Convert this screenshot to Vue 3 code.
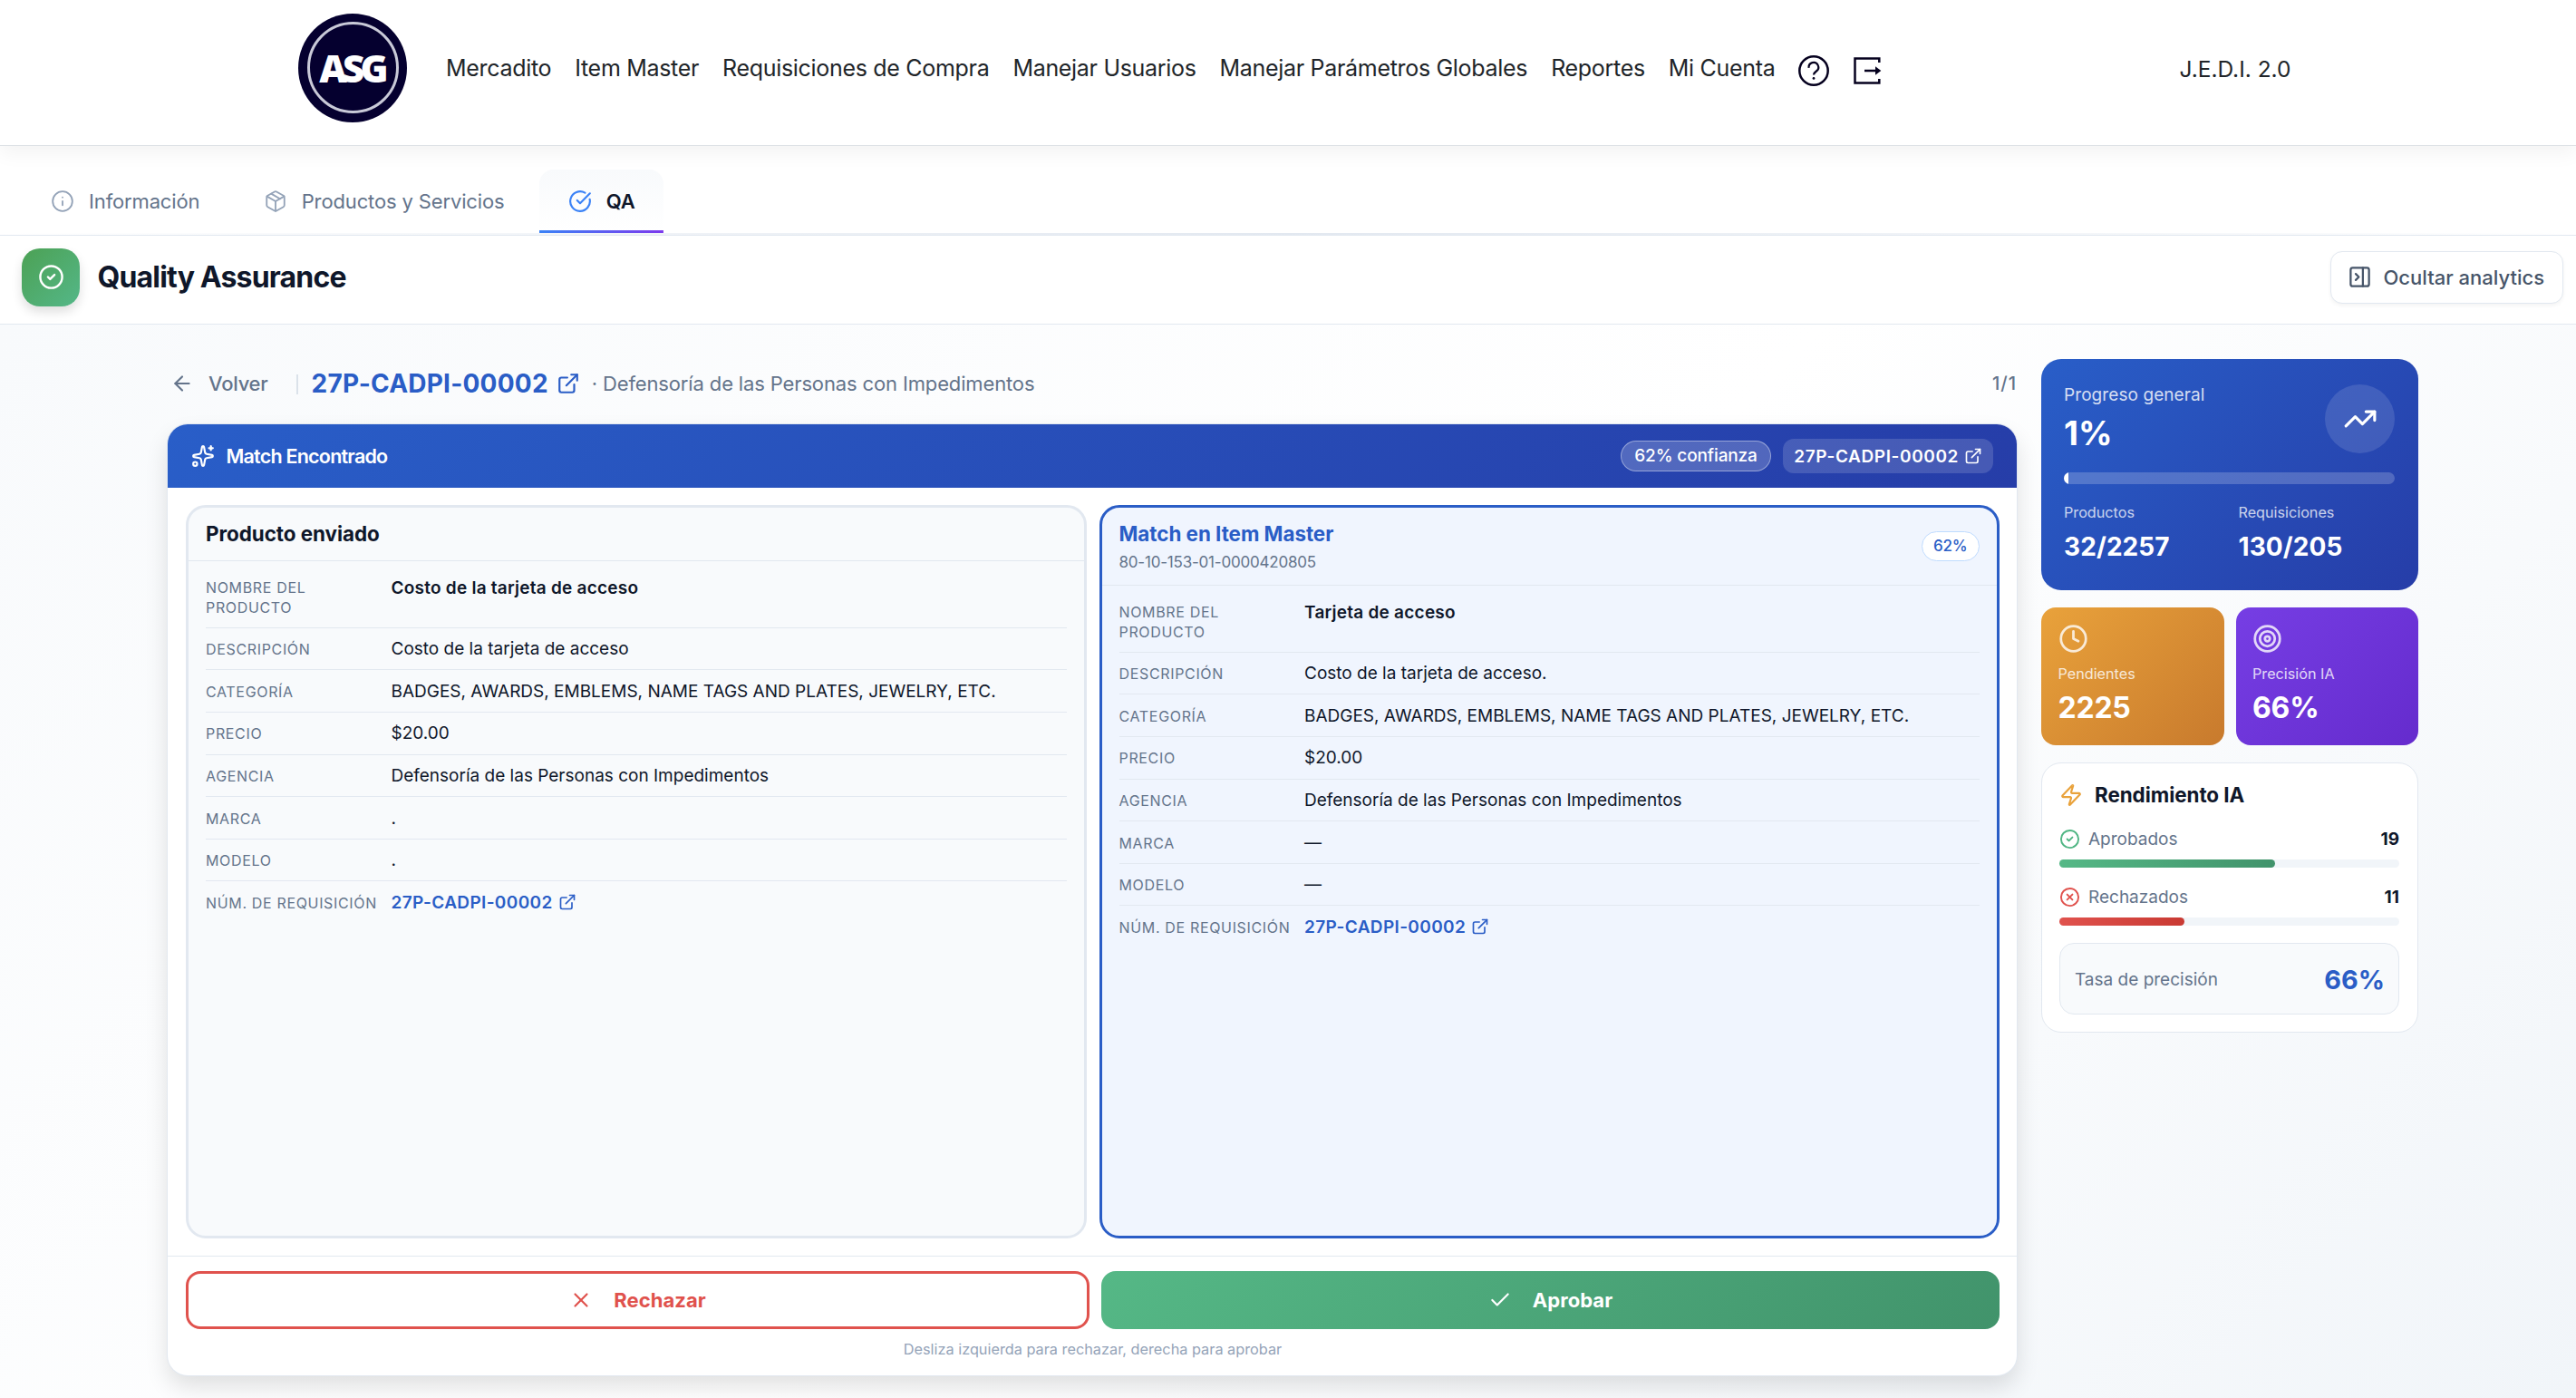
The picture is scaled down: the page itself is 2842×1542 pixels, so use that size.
<template>
  <div class="page">
    <header class="topbar">
      <div class="logo">
        <div class="logo-ring"><span>ASG</span></div>
      </div>
      <nav class="main-nav">
        <a v-for="link in navLinks" :key="link">{{ link }}</a>
        <svg class="nav-help" viewBox="0 0 36 36" fill="none" stroke="currentColor" stroke-width="2.5" v-html="icons.help"></svg>
        <svg class="nav-exit" viewBox="0 0 36 36" fill="none" stroke="currentColor" stroke-width="2.5" v-html="icons.exit"></svg>
      </nav>
      <span class="brand">J.E.D.I. 2.0</span>
    </header>

    <div class="tabs">
      <div v-for="tab in tabs" :key="tab.label" class="tab" :class="{ active: tab.active }">
        <svg class="icon tab-icon" viewBox="0 0 24 24" v-html="icons[tab.icon]"></svg>
        <span>{{ tab.label }}</span>
      </div>
    </div>

    <div class="title-bar">
      <div class="title-icon">
        <svg class="icon" viewBox="0 0 24 24" v-html="icons.circleCheck"></svg>
      </div>
      <h1>Quality Assurance</h1>
      <button class="hide-btn">
        <svg class="icon" viewBox="0 0 24 24" v-html="icons.panel"></svg>
        <span>Ocultar analytics</span>
      </button>
    </div>

    <main class="content">
      <section class="review">
        <div class="crumbs">
          <svg class="icon back-icon" viewBox="0 0 24 24" v-html="icons.arrowLeft"></svg>
          <span class="back">Volver</span>
          <span class="divider"></span>
          <span class="req-id">{{ reqId }}</span>
          <svg class="icon req-icon" viewBox="0 0 24 24" v-html="icons.external"></svg>
          <span class="agency">· Defensoría de las Personas con Impedimentos</span>
          <span class="count">1/1</span>
        </div>

        <div class="match-card">
          <div class="match-head">
            <svg class="icon spark" viewBox="0 0 24 24" v-html="icons.sparkles"></svg>
            <span class="match-title">Match Encontrado</span>
            <span class="confidence">62% confianza</span>
            <span class="req-tag">
              <span>{{ reqId }}</span>
              <svg class="icon" viewBox="0 0 24 24" v-html="icons.external"></svg>
            </span>
          </div>

          <div class="panels">
            <div v-for="panel in panels" :key="panel.title" class="panel" :class="{ matched: panel.code }">
              <div class="panel-head">
                <div>
                  <h2>{{ panel.title }}</h2>
                  <p v-if="panel.code" class="code">{{ panel.code }}</p>
                </div>
                <span v-if="panel.code" class="score">62%</span>
              </div>
              <div class="rows">
                <div v-for="(value, i) in panel.values" :key="i" class="row">
                  <span class="label">{{ labels[i] }}</span>
                  <span class="value" :class="{ strong: i === 0 }">{{ value }}</span>
                </div>
                <div class="row">
                  <span class="label">Núm. de requisición</span>
                  <span class="value link">
                    <span>{{ reqId }}</span>
                    <svg class="icon" viewBox="0 0 24 24" v-html="icons.external"></svg>
                  </span>
                </div>
              </div>
            </div>
          </div>

          <div class="match-foot">
            <div class="actions">
              <button class="reject">
                <svg class="icon" viewBox="0 0 24 24" v-html="icons.x"></svg>
                <span>Rechazar</span>
              </button>
              <button class="approve">
                <svg class="icon" viewBox="0 0 24 24" v-html="icons.check"></svg>
                <span>Aprobar</span>
              </button>
            </div>
            <p class="hint">Desliza izquierda para rechazar, derecha para aprobar</p>
          </div>
        </div>
      </section>

      <aside class="analytics">
        <div class="progress-card">
          <div class="progress-top">
            <div>
              <p class="progress-label">Progreso general</p>
              <p class="progress-value">1%</p>
            </div>
            <div class="trend">
              <svg class="icon" viewBox="0 0 24 24" v-html="icons.trending"></svg>
            </div>
          </div>
          <div class="progress-track"><div class="progress-fill" :style="{ width: progress + '%' }"></div></div>
          <div class="totals">
            <div v-for="total in totals" :key="total.label">
              <p class="total-label">{{ total.label }}</p>
              <p class="total-value">{{ total.value }}</p>
            </div>
          </div>
        </div>

        <div class="mini-cards">
          <div v-for="card in miniCards" :key="card.label" class="mini" :class="card.kind">
            <svg class="icon" viewBox="0 0 24 24" v-html="icons[card.icon]"></svg>
            <p class="mini-label">{{ card.label }}</p>
            <p class="mini-value">{{ card.value }}</p>
          </div>
        </div>

        <div class="perf-card">
          <div class="perf-title">
            <svg class="icon" viewBox="0 0 24 24" v-html="icons.zap"></svg>
            <h3>Rendimiento IA</h3>
          </div>
          <div v-for="item in performance" :key="item.label" class="perf-item" :class="item.kind">
            <div class="perf-row">
              <svg class="icon" viewBox="0 0 24 24" v-html="icons[item.icon]"></svg>
              <span class="perf-label">{{ item.label }}</span>
              <span class="perf-count">{{ item.count }}</span>
            </div>
            <div class="perf-track"><div class="perf-fill" :style="{ width: item.percent + '%' }"></div></div>
          </div>
          <div class="rate">
            <span>Tasa de precisión</span>
            <strong>66%</strong>
          </div>
        </div>
      </aside>
    </main>
  </div>
</template>

<script setup>
import { ref } from 'vue'

const reqId = '27P-CADPI-00002'
const progress = ref(1.4)

const navLinks = [
  'Mercadito',
  'Item Master',
  'Requisiciones de Compra',
  'Manejar Usuarios',
  'Manejar Parámetros Globales',
  'Reportes',
  'Mi Cuenta'
]

const tabs = [
  { label: 'Información', icon: 'info' },
  { label: 'Productos y Servicios', icon: 'package' },
  { label: 'QA', icon: 'checkBig', active: true }
]

const labels = ['Nombre del producto', 'Descripción', 'Categoría', 'Precio', 'Agencia', 'Marca', 'Modelo']

const category = 'BADGES, AWARDS, EMBLEMS, NAME TAGS AND PLATES, JEWELRY, ETC.'
const agency = 'Defensoría de las Personas con Impedimentos'

const panels = [
  {
    title: 'Producto enviado',
    values: ['Costo de la tarjeta de acceso', 'Costo de la tarjeta de acceso', category, '$20.00', agency, '.', '.']
  },
  {
    title: 'Match en Item Master',
    code: '80-10-153-01-0000420805',
    values: ['Tarjeta de acceso', 'Costo de la tarjeta de acceso.', category, '$20.00', agency, '—', '—']
  }
]

const totals = [
  { label: 'Productos', value: '32/2257' },
  { label: 'Requisiciones', value: '130/205' }
]

const miniCards = [
  { label: 'Pendientes', value: '2225', icon: 'clock', kind: 'orange' },
  { label: 'Precisión IA', value: '66%', icon: 'target', kind: 'purple' }
]

const performance = [
  { label: 'Aprobados', count: 19, percent: 63.4, icon: 'circleCheck', kind: 'good' },
  { label: 'Rechazados', count: 11, percent: 36.7, icon: 'circleX', kind: 'bad' }
]

const icons = {
  help: '<circle cx="18" cy="18" r="15.7"/><path d="M12.6 14.8a5.3 5.3 0 1 1 8.3 3.7c-2 1.400-2.900 2.100-2.900 4.100" stroke-width="2.2"/><circle cx="18" cy="26.4" r="1.4" fill="currentColor" stroke="none"/>',
  exit: '<path d="M31.3 9V4.5H4.5v27h26.8V27"/><path d="M15 18h13"/><path d="M27 13.2l6.300 4.800-6.300 4.800z" fill="currentColor" stroke="none"/>',
  info: '<circle cx="12" cy="12" r="10"/><path d="M12 16v-4"/><path d="M12 8h.01"/>',
  package: '<path d="M11 21.730a2 2 0 0 0 2 0l7-4A2 2 0 0 0 21 16V8a2 2 0 0 0-1-1.730l-7-4a2 2 0 0 0-2 0l-7 4A2 2 0 0 0 3 8v8a2 2 0 0 0 1 1.730z"/><path d="M12 22V12"/><path d="M3.290 7 12 12l8.710-5"/><path d="m7.500 4.270 9 5.150"/>',
  checkBig: '<path d="M21.801 10A10 10 0 1 1 17 3.335"/><path d="m9 11 3 3L22 4"/>',
  circleCheck: '<circle cx="12" cy="12" r="10"/><path d="m9 12 2 2 4-4"/>',
  circleX: '<circle cx="12" cy="12" r="10"/><path d="m15 9-6 6"/><path d="m9 9 6 6"/>',
  panel: '<rect width="18" height="18" x="3" y="3" rx="2"/><path d="M15 3v18"/><path d="m8 9 3 3-3 3"/>',
  arrowLeft: '<path d="m12 19-7-7 7-7"/><path d="M19 12H5"/>',
  external: '<path d="M15 3h6v6"/><path d="M10 14 21 3"/><path d="M18 13v6a2 2 0 0 1-2 2H5a2 2 0 0 1-2-2V8a2 2 0 0 1 2-2h6"/>',
  sparkles: '<path d="M11.017 2.814a1 1 0 0 1 1.966 0l1.051 5.558a2 2 0 0 0 1.594 1.594l5.558 1.051a1 1 0 0 1 0 1.966l-5.558 1.051a2 2 0 0 0-1.594 1.594l-1.051 5.558a1 1 0 0 1-1.966 0l-1.051-5.558a2 2 0 0 0-1.594-1.594l-5.558-1.051a1 1 0 0 1 0-1.966l5.558-1.051a2 2 0 0 0 1.594-1.594z"/><path d="M20 2v4"/><path d="M22 4h-4"/><circle cx="4" cy="20" r="2"/>',
  x: '<path d="M18 6 6 18"/><path d="m6 6 12 12"/>',
  check: '<path d="M20 6 9 17l-5-5"/>',
  trending: '<path d="M16 7h6v6"/><path d="m22 7-8.500 8.500-5-5L2 17"/>',
  clock: '<circle cx="12" cy="12" r="10"/><path d="M12 6v6l4 2"/>',
  target: '<circle cx="12" cy="12" r="10"/><circle cx="12" cy="12" r="6"/><circle cx="12" cy="12" r="2"/>',
  zap: '<path d="M4 14a1 1 0 0 1-.780-1.630l9.900-10.200a.5.5 0 0 1 .860.460l-1.920 6.020A1 1 0 0 0 13 10h7a1 1 0 0 1 .780 1.630l-9.900 10.200a.5.5 0 0 1-.860-.460l1.920-6.020A1 1 0 0 0 11 14z"/>'
}
</script>

<style>
body {
  margin: 0;
  background: #fff;
}
</style>

<style scoped>
* {
  box-sizing: border-box;
}

.page {
  height: 1542px;
  overflow: hidden;
  display: flex;
  flex-direction: column;
  font-family: Inter, 'Liberation Sans', sans-serif;
  color: #0f172a;
  background: #fff;
}

h1,
h2,
h3,
p {
  margin: 0;
}

button {
  font-family: inherit;
}

.icon {
  flex: none;
  display: block;
  fill: none;
  stroke: currentColor;
  stroke-width: 2;
  stroke-linecap: round;
  stroke-linejoin: round;
}

.topbar {
  position: relative;
  z-index: 2;
  flex: none;
  height: 161px;
  padding: 0 314.5px 11px 329px;
  display: flex;
  align-items: center;
  background: #fff;
  border-bottom: 1px solid #dee2e6;
  box-shadow: 0 8px 20px rgba(0, 0, 0, 0.05);
}

.logo {
  width: 120px;
  height: 120px;
  border-radius: 50%;
  background: #05002f;
  display: flex;
  align-items: center;
  justify-content: center;
}

.logo-ring {
  width: 101px;
  height: 101px;
  border: 3px solid #c9cad8;
  border-radius: 50%;
  display: flex;
  align-items: center;
  justify-content: center;
  font-family: 'Open Sans', sans-serif;
  font-size: 42px;
  font-weight: 800;
  letter-spacing: -4.8px;
  color: #fff;
}

.logo-ring span {
  margin-right: 2px;
}

.main-nav {
  margin-left: 43px;
  display: flex;
  align-items: center;
  gap: 26px;
  font-size: 25px;
  line-height: 30px;
  letter-spacing: -0.31px;
  color: #212529;
}

.main-nav svg {
  width: 36px;
  height: 36px;
  margin-top: 6px;
  color: #05001e;
}

.main-nav .nav-help {
  margin-left: -1px;
}

.main-nav .nav-exit {
  margin-left: -3px;
}

.brand {
  margin-left: auto;
  margin-top: 2px;
  font-size: 24.5px;
  color: #212529;
}

.tabs {
  flex: none;
  height: 99px;
  padding: 26px 24.5px 0;
  display: flex;
  gap: 7.3px;
  border-bottom: 1px solid #e2e8f0;
  background: linear-gradient(90deg, transparent, #e2e8f0, transparent) bottom / 100% 2px no-repeat;
}

.tab {
  height: 70px;
  padding: 2px 31.5px 0;
  display: flex;
  align-items: center;
  gap: 16px;
  font-size: 22px;
  letter-spacing: -0.14px;
  color: #64748b;
  border-bottom: 3px solid transparent;
}

.tab-icon {
  width: 26px;
  height: 26px;
  stroke-width: 1.7;
  color: #94a3b8;
}

.tab.active {
  padding-bottom: 3px;
  font-weight: 600;
  color: #0f172a;
  border-radius: 16px 16px 0 0;
  border-bottom: none;
  background:
    linear-gradient(90deg, #3b82f6, #7c3aed) bottom / 100% 3px no-repeat,
    linear-gradient(180deg, #f8fafc, #fff);
}

.tab.active .tab-icon {
  stroke-width: 2;
  color: #3b82f6;
}

.title-bar {
  flex: none;
  height: 98px;
  padding: 0 14px 6px 24px;
  display: flex;
  align-items: center;
  background: #fff;
  border-bottom: 1px solid #e2e8f0;
}

.title-icon {
  width: 64px;
  height: 64px;
  border-radius: 20px;
  display: flex;
  align-items: center;
  justify-content: center;
  color: #fff;
  background: linear-gradient(135deg, #4ca154, #54b788);
  box-shadow: 0 6px 12px rgba(0, 0, 0, 0.13);
}

.title-icon .icon {
  width: 29px;
  height: 29px;
}

h1 {
  margin-left: 19.5px;
  font-size: 32px;
  line-height: 40px;
  font-weight: 700;
  letter-spacing: -0.83px;
}

.hide-btn {
  margin-left: auto;
  width: 257px;
  height: 58px;
  padding: 0 17.5px;
  display: flex;
  align-items: center;
  gap: 13px;
  font-size: 22px;
  font-weight: 500;
  color: #475569;
  white-space: nowrap;
  background: #fff;
  border: 1px solid #e2e8f0;
  border-radius: 13px;
  box-shadow: 0 2px 4px rgba(0, 0, 0, 0.05);
}

.hide-btn .icon {
  width: 27px;
  height: 27px;
}

.content {
  flex: 1;
  min-height: 0;
  display: flex;
  gap: 27px;
  padding: 38px 174px 0 185px;
  background: linear-gradient(135deg, #f8fafc 0%, #fff 50%, #f1f5f9 100%);
}

.review {
  flex: 1;
}

.crumbs {
  height: 54px;
  display: flex;
  align-items: center;
  margin-bottom: 18px;
  font-size: 22px;
  color: #64748b;
}

.back-icon {
  width: 26px;
  height: 26px;
  margin-left: 3px;
}

.back {
  margin-left: 16px;
  font-weight: 500;
  letter-spacing: -0.25px;
}

.divider {
  width: 2px;
  height: 22px;
  margin: 2px 15px 0 31px;
  background: #dbe2ea;
}

.req-id {
  font-size: 28px;
  font-weight: 700;
  letter-spacing: 0.22px;
  color: #2a5dc6;
}

.req-icon {
  width: 26px;
  height: 26px;
  margin-left: 9px;
  color: #2a5dc6;
}

.agency {
  margin-left: 13px;
  letter-spacing: -0.14px;
}

.count {
  margin-left: auto;
  font-size: 20px;
  font-weight: 500;
  letter-spacing: 1px;
}

.match-card {
  height: 1049px;
  display: flex;
  flex-direction: column;
  overflow: hidden;
  background: #fff;
  border-radius: 22px;
  box-shadow:
    0 0 0 1px #e2e8f0,
    0 13px 26px rgba(0, 0, 0, 0.12);
}

.match-head {
  flex: none;
  height: 70px;
  padding: 0 26px;
  display: flex;
  align-items: center;
  color: #fff;
  background: linear-gradient(135deg, #295ec8, #263da8);
}

.spark {
  width: 26px;
  height: 26px;
}

.match-title {
  margin-left: 12.5px;
  font-size: 21.5px;
  font-weight: 600;
  letter-spacing: -0.78px;
}

.confidence {
  margin-left: auto;
  height: 34px;
  padding: 0 14px;
  line-height: 31px;
  font-size: 19px;
  font-weight: 500;
  letter-spacing: -0.13px;
  border: 1px solid rgba(255, 255, 255, 0.4);
  border-radius: 17px;
  background: rgba(255, 255, 255, 0.2);
}

.req-tag {
  height: 38px;
  margin-left: 13px;
  padding: 0 12.5px;
  display: flex;
  align-items: center;
  gap: 5.5px;
  font-size: 19px;
  font-weight: 600;
  letter-spacing: 0.6px;
  border-radius: 12px;
  background: rgba(255, 255, 255, 0.15);
}

.req-tag .icon {
  width: 20px;
  height: 20px;
}

.panels {
  flex: 1;
  display: flex;
  gap: 14px;
  padding: 19px 19px 19px 20px;
}

.panel {
  flex: 1;
  background: #f8fafc;
  border: 3px solid #e2e8f0;
  border-radius: 22px;
}

.panel.matched {
  background: #f0f5fe;
  border-color: #2a5dc6;
}

.panel-head {
  height: 59px;
  padding: 0 19px;
  display: flex;
  align-items: center;
  justify-content: space-between;
  border-bottom: 1px solid #e2e8f0;
}

.matched .panel-head {
  height: 86px;
}

h2 {
  font-size: 22.4px;
  line-height: 30px;
  font-weight: 700;
  letter-spacing: -0.03px;
}

.matched h2 {
  margin-top: 1px;
  color: #2a5dc6;
}

.code {
  margin-top: 3px;
  font-size: 17px;
  line-height: 26px;
  letter-spacing: -0.2px;
  color: #64748b;
}

.score {
  height: 33px;
  padding: 0 12.5px;
  line-height: 31px;
  font-size: 17px;
  font-weight: 500;
  letter-spacing: -0.2px;
  color: #2a5dc6;
  background: #fff;
  border: 1px solid #bfdbfe;
  border-radius: 17px;
}

.rows {
  padding: 6px 19px 0;
}

.row {
  min-height: 46.6px;
  padding-top: 9.5px;
  display: flex;
  border-bottom: 1px solid #e2e8f0;
}

.row:first-child {
  min-height: 67.8px;
  padding-top: 10px;
}

.row:last-child {
  border-bottom: none;
}

.label {
  width: 204.5px;
  flex: none;
  padding-top: 3px;
  padding-right: 8px;
  font-size: 16px;
  line-height: 22px;
  letter-spacing: 0.66px;
  text-transform: uppercase;
  color: #64748b;
}

.row:first-child .label {
  padding-top: 2px;
  padding-right: 60px;
}

.row:last-child .label {
  padding-right: 0;
  white-space: nowrap;
}

.value {
  font-size: 19px;
  line-height: 27px;
}

.value.strong {
  font-weight: 600;
  letter-spacing: 0.24px;
}

.value.link {
  display: flex;
  align-items: center;
  gap: 6px;
  height: 27px;
  font-weight: 600;
  letter-spacing: 0.36px;
  color: #2a5dc6;
}

.value.link .icon {
  width: 20px;
  height: 20px;
}

.match-foot {
  flex: none;
  height: 132px;
  padding: 16px 19px 0 20px;
  border-top: 1px solid #e2e8f0;
}

.actions {
  display: flex;
  gap: 13px;
}

.actions button {
  flex: 1;
  box-sizing: content-box;
  height: 64px;
  padding: 0;
  display: flex;
  align-items: center;
  justify-content: center;
  gap: 23px;
  font-size: 22px;
  font-weight: 700;
  letter-spacing: 0.05px;
  border: none;
  border-radius: 16px;
}

.actions .icon {
  width: 26px;
  height: 26px;
}

.actions .reject {
  height: 58px;
  color: #e0524d;
  background: #fff;
  border: 3px solid #e0524d;
}

.actions .approve {
  color: #fff;
  background: linear-gradient(135deg, #55b886, #41936b);
}

.hint {
  margin-top: 11px;
  font-size: 16.3px;
  line-height: 22px;
  text-align: center;
  color: #94a3b8;
}

.analytics {
  width: 416px;
  flex: none;
}

.progress-card {
  height: 255px;
  padding: 28px 26px 0 25px;
  color: #fff;
  border-radius: 22px;
  background: linear-gradient(135deg, #295ec8, #263da8);
}

.progress-top {
  display: flex;
  justify-content: space-between;
}

.progress-label {
  font-size: 19px;
  line-height: 24px;
  letter-spacing: 0.08px;
  opacity: 0.8;
}

.progress-value {
  margin-top: 7px;
  font-size: 37px;
  line-height: 45px;
  font-weight: 700;
}

.trend {
  width: 77px;
  height: 76px;
  border-radius: 50%;
  display: flex;
  align-items: center;
  justify-content: center;
  background: rgba(255, 255, 255, 0.12);
}

.trend .icon {
  width: 38px;
  height: 38px;
}

.progress-track {
  margin-top: 21px;
  height: 13px;
  overflow: hidden;
  border-radius: 7px;
  background: rgba(255, 255, 255, 0.2);
}

.progress-fill {
  height: 100%;
  background: #fff;
}

.totals {
  margin-top: 20px;
  display: grid;
  grid-template-columns: 192.5px 1fr;
}

.total-label {
  font-size: 16.2px;
  line-height: 22px;
  opacity: 0.75;
}

.total-value {
  margin-top: 10px;
  font-size: 28px;
  line-height: 34px;
  font-weight: 700;
  letter-spacing: 0.1px;
}

.mini-cards {
  margin-top: 19px;
  display: grid;
  grid-template-columns: 1fr 1fr;
  gap: 13px;
}

.mini {
  height: 152px;
  padding: 18px 19px 0 18.5px;
  color: #fff;
  border-radius: 16px;
}

.mini.orange {
  background: linear-gradient(135deg, #e9a23b, #c87a2d);
}

.mini.purple {
  background: linear-gradient(135deg, #763ee4, #652bcd);
}

.mini .icon {
  width: 33px;
  height: 33px;
  opacity: 0.8;
}

.mini-label {
  margin-top: 11px;
  font-size: 16.2px;
  line-height: 22px;
  opacity: 0.8;
}

.mini-value {
  margin-top: 8px;
  font-size: 32px;
  line-height: 38px;
  font-weight: 700;
  letter-spacing: -0.2px;
}

.perf-card {
  margin-top: 19px;
  height: 298px;
  padding: 19px 20px 0 19px;
  background: #fff;
  border: 1px solid #e2e8f0;
  border-radius: 22px;
}

.perf-title {
  height: 32px;
  margin-bottom: 14px;
  display: flex;
  align-items: center;
  gap: 13px;
}

.perf-title .icon {
  width: 26px;
  height: 26px;
  color: #e9a23b;
}

h3 {
  font-size: 22.4px;
  line-height: 30px;
  font-weight: 700;
  letter-spacing: -0.03px;
}

.perf-item {
  height: 64px;
}

.perf-row {
  height: 41px;
  padding-bottom: 4px;
  display: flex;
  align-items: center;
  gap: 9px;
}

.perf-row .icon {
  width: 23px;
  height: 23px;
}

.good .icon {
  color: #4fb583;
}

.bad .icon {
  color: #e0524d;
}

.perf-label {
  font-size: 19px;
  color: #64748b;
}

.perf-count {
  margin-left: auto;
  font-size: 19px;
  font-weight: 700;
}

.perf-track {
  height: 9px;
  border-radius: 5px;
  background: #f1f5f9;
}

.perf-fill {
  height: 100%;
  border-radius: 5px;
}

.good .perf-fill {
  background: linear-gradient(90deg, #55b886, #41936b);
}

.bad .perf-fill {
  background: linear-gradient(90deg, #e0524d, #c93a33);
}

.rate {
  height: 79px;
  margin-top: 5px;
  padding: 1px 15px 0 16px;
  display: flex;
  align-items: center;
  justify-content: space-between;
  font-size: 19px;
  color: #64748b;
  background: #f8fafc;
  border: 1px solid #e2e8f0;
  border-radius: 16px;
}

.rate strong {
  font-size: 28.8px;
  font-weight: 700;
  color: #2a5dc6;
}
</style>
